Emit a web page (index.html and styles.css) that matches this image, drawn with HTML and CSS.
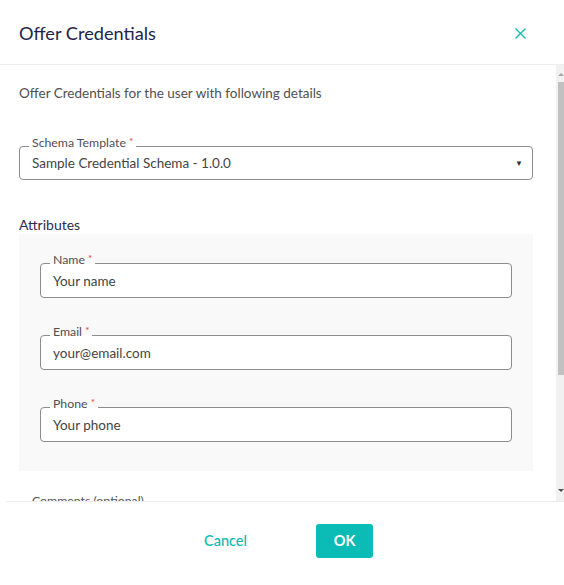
FILE: index.html
```html
<!DOCTYPE html>
<html lang="en">
<head>
<meta charset="utf-8">
<title>Offer Credentials</title>
<link rel="stylesheet" href="styles.css">
</head>
<body>
<div class="dialog">
  <header class="dialog-header">
    <h2 class="dialog-title">Offer Credentials</h2>
    <button class="close-btn" aria-label="Close">
      <svg width="11" height="11" viewBox="0 0 11 11"><path d="M0.5 0.5L10.5 10.5M10.5 0.5L0.5 10.5" stroke="#0bbbb5" stroke-width="1.3" fill="none"/></svg>
    </button>
  </header>
  <div class="dialog-body">
    <div class="dialog-content">
      <p class="intro">Offer Credentials for the user with following details</p>
      <div class="field select-field">
        <span class="field-label">Schema Template <span class="req">*</span></span>
        <span class="field-value">Sample Credential Schema - 1.0.0</span>
        <span class="caret">▼</span>
      </div>
      <h3 class="section-title">Attributes</h3>
      <div class="attr-panel">
        <div class="field">
          <span class="field-label">Name <span class="req">*</span></span>
          <span class="field-value">Your name</span>
        </div>
        <div class="field">
          <span class="field-label">Email <span class="req">*</span></span>
          <span class="field-value">your@email.com</span>
        </div>
        <div class="field">
          <span class="field-label">Phone <span class="req">*</span></span>
          <span class="field-value">Your phone</span>
        </div>
      </div>
      <div class="field area-field">
        <span class="field-label">Comments (optional)</span>
      </div>
    </div>
    <div class="scrollbar" aria-hidden="true">
      <span class="sb-arrow sb-up"></span>
      <span class="sb-thumb"></span>
      <span class="sb-space"></span>
      <span class="sb-arrow sb-down"></span>
    </div>
  </div>
  <footer class="dialog-footer">
    <button class="btn btn-text">Cancel</button>
    <button class="btn btn-primary">OK</button>
  </footer>
</div>
</body>
</html>
```

FILE: styles.css
```css
* { box-sizing: border-box; }
html, body { margin: 0; padding: 0; background: #fff; }
body {
  font-family: "Lato", "Noto Sans", sans-serif;
  color: #444;
}
.dialog {
  width: 564px;
  height: 585px;
  display: flex;
  flex-direction: column;
  background: #fff;
  overflow: hidden;
}
.dialog-header {
  height: 65px;
  flex: none;
  border-bottom: 1px solid #ececec;
  display: flex;
  align-items: center;
  justify-content: space-between;
  padding: 2px 38px 0 19px;
}
.dialog-title {
  margin: 0;
  font-size: 18.2px;
  font-weight: 400;
  color: #23234a;
}
.close-btn {
  background: none;
  border: 0;
  padding: 0;
  width: 11px;
  height: 11px;
  display: flex;
  cursor: pointer;
}
.dialog-body {
  flex: 1;
  min-height: 0;
  display: flex;
}
.dialog-content {
  flex: 1;
  overflow: hidden;
  padding: 20px 23px 0 19px;
}
.scrollbar {
  width: 8px;
  flex: none;
  background: #f1f1f1;
  display: flex;
  flex-direction: column;
  align-items: flex-end;
}
.sb-arrow {
  width: 6px;
  height: 17px;
  display: flex;
  align-items: center;
  justify-content: center;
}
.sb-up::before {
  content: "";
  border-left: 3px solid transparent;
  border-right: 3px solid transparent;
  border-bottom: 3px solid #a8a8a8;
  margin-top: 1px;
}
.sb-down::before {
  content: "";
  border-left: 3px solid transparent;
  border-right: 3px solid transparent;
  border-top: 3px solid #505050;
  margin-bottom: 4px;
}
.sb-thumb {
  width: 6px;
  height: 293px;
  background: #c1c1c1;
  flex: none;
}
.sb-space { flex: 1; }
.intro {
  margin: 0;
  font-size: 13.5px;
  line-height: 16px;
  color: #505050;
}
.field {
  position: relative;
  height: 35px;
  border: 1px solid #8c8c8c;
  border-radius: 4px;
  background: #fff;
  display: flex;
  align-items: center;
  padding: 0 12px;
  flex: none;
}
.field-label {
  position: absolute;
  top: -13px;
  left: 9px;
  padding: 0 3px;
  font-size: 12.3px;
  line-height: 14px;
  color: #505050;
  background: linear-gradient(to bottom, transparent 0, transparent 12px, #fff 12px);
}
.req { color: #e53935; font-size: 10px; vertical-align: 2px; }
.field-value {
  font-size: 13.5px;
  color: #444;
  flex: 1;
}
.select-field { margin-top: 45px; height: 34px; }
.caret {
  font-size: 8px;
  color: #333;
  margin-right: -3px;
}
.section-title {
  margin: 36px 0 0;
  font-size: 14px;
  line-height: 18px;
  font-weight: 400;
  color: #2b2b52;
}
.attr-panel {
  background: #f9f9f9;
  padding: 29px 21px;
  display: flex;
  flex-direction: column;
  gap: 37px;
}
.area-field {
  margin-top: 35px;
  height: 96px;
}
.dialog-footer {
  flex: none;
  height: 84px;
  border-top: 1px solid #ececec;
  display: flex;
  align-items: center;
  justify-content: center;
  gap: 62px;
  padding: 0 0 6px 0;
  margin-left: 6px;
}
.btn {
  font-family: "Lato", "Noto Sans", sans-serif;
  font-size: 14.5px;
  height: 34px;
  border: 0;
  border-radius: 3px;
  padding: 0;
  width: 57px;
  cursor: pointer;
}
.btn-text {
  background: none;
  color: #0bbbb5;
  font-weight: 500;
}
.btn-primary {
  background: #0bbbb5;
  color: #fff;
  font-weight: 700;
}
```
